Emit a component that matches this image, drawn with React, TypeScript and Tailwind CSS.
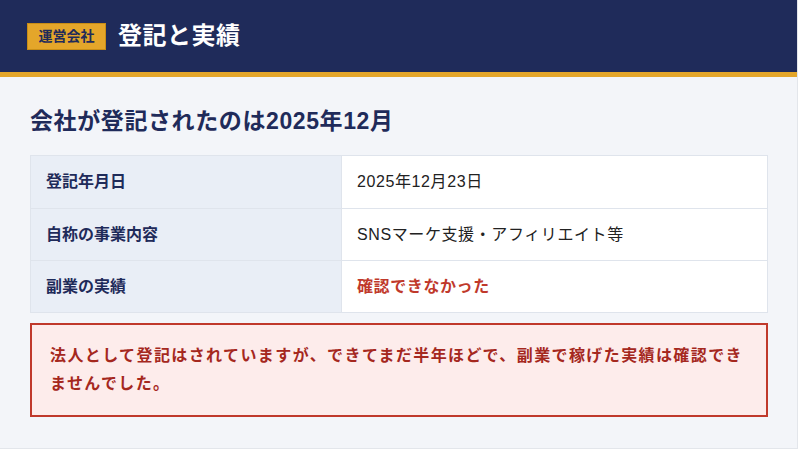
const font = {
  fontFamily: '"Liberation Sans", "Noto Sans CJK JP", "Noto Sans", sans-serif',
};

const rows = [
  { label: '登記年月日', value: '2025年12月23日', alert: false },
  { label: '自称の事業内容', value: 'SNSマーケ支援・アフィリエイト等', alert: false },
  { label: '副業の実績', value: '確認できなかった', alert: true },
];

export default function App() {
  return (
    <div className="w-[800px] h-[451px] bg-white" style={font}>
      <div className="w-[798px] h-[449px] bg-[#f3f5f9] border-r border-b border-[#e3e6eb] flex flex-col">
        <header className="h-[77px] shrink-0 bg-[#1f2b5a] border-b-[5px] border-[#e4a62a] px-[27px] flex items-center gap-[12px]">
          <span className="h-[27px] w-[79px] flex items-center justify-center bg-[#e4a62a] border border-[#c88d16] text-[14px] font-bold text-[#1f2b5a]">
            運営会社
          </span>
          <h1 className="text-[24px] font-bold text-white tracking-[0.5px]">登記と実績</h1>
        </header>

        <main className="pl-[30px] pr-[29px]">
          <h2 className="mt-[28px] text-[23px] leading-[32px] font-bold text-[#1f2b5a] tracking-[0.6px]">
            会社が登記されたのは2025年12月
          </h2>

          <div className="mt-[18px] border border-[#dfe4ec] bg-white">
            {rows.map((r, i) => (
              <div
                key={r.label}
                className={`flex h-[52px] ${i > 0 ? 'border-t border-[#dfe4ec]' : ''}`}
              >
                <div className="w-[311px] bg-[#e9eef6] border-r border-[#dfe4ec] flex items-center px-[15px] text-[16px] font-bold text-[#1f2b5a]">
                  {r.label}
                </div>
                <div
                  className={`flex-1 flex items-center px-[15px] text-[16px] tracking-[0.6px] ${
                    r.alert ? 'font-bold text-[#c0392b]' : 'text-[#222]'
                  }`}
                >
                  {r.value}
                </div>
              </div>
            ))}
          </div>

          <div className="mt-[10px] border-2 border-[#c0392b] bg-[#fdeceb] px-[18px] py-[17px]">
            <p className="text-[16px] leading-[28px] font-bold text-[#a5281e] tracking-[1.4px]">
              法人として登記はされていますが、できてまだ半年ほどで、副業で稼げた実績は確認できませんでした。
            </p>
          </div>
        </main>
      </div>
    </div>
  );
}
